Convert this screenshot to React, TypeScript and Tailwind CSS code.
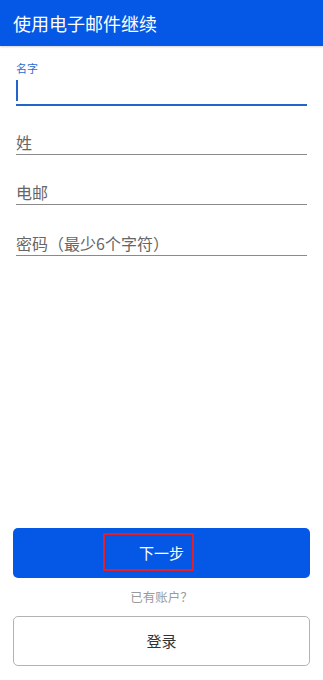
import React from "react";

const font = { fontFamily: '"Noto Sans CJK SC", "Noto Sans", Roboto, sans-serif' };

export default function App() {
  return (
    <div className="flex h-[680px] w-full flex-col bg-white" style={font}>
      <div className="relative z-10 flex h-[46px] shrink-0 items-center bg-[#0558e6] px-[13px] text-[18px] text-white shadow-[0_1px_2px_rgba(0,0,0,0.18)]">
        使用电子邮件继续
      </div>

      <div className="flex flex-col px-[16px] pt-[14px]">
        <div className="flex flex-col">
          <div className="h-[17px] text-[11px] leading-[17px] text-[#2c6bd0]">名字</div>
          <div className="flex h-[29px] items-start pt-[3px] border-b-2 border-[#2463c9]">
            <div className="h-[21px] w-[2px] bg-[#2463c9]" />
          </div>
        </div>
        <div className="flex h-[49px] items-end border-b border-[#8a8a8a] pb-[1px] text-[16px] leading-[22px] text-[#666]">
          姓
        </div>
        <div className="flex h-[50px] items-end border-b border-[#8a8a8a] pb-[1px] text-[16px] leading-[22px] text-[#666]">
          电邮
        </div>
        <div className="flex h-[51px] items-end border-b border-[#8a8a8a] pb-[1px] text-[16px] leading-[22px] text-[#666]">
          密码（最少6个字符）
        </div>
      </div>

      <div className="flex-1" />

      <div className="flex flex-col px-[13px] pb-[14px]">
        <div className="relative flex h-[50px] items-center justify-center rounded-[5px] bg-[#0558e6] text-[15px] text-white">
          下一步
          <div className="absolute left-[90px] top-[5px] h-[38px] w-[91px] border-2 border-[#e0202a]" />
        </div>
        <div className="flex h-[38px] items-center justify-center text-[12.5px] text-[#9a9a9a]">
          已有账户？
        </div>
        <div className="flex h-[50px] items-center justify-center rounded-[5px] border border-[#b3b3b3] text-[15px] text-[#333]">
          登录
        </div>
      </div>
    </div>
  );
}
